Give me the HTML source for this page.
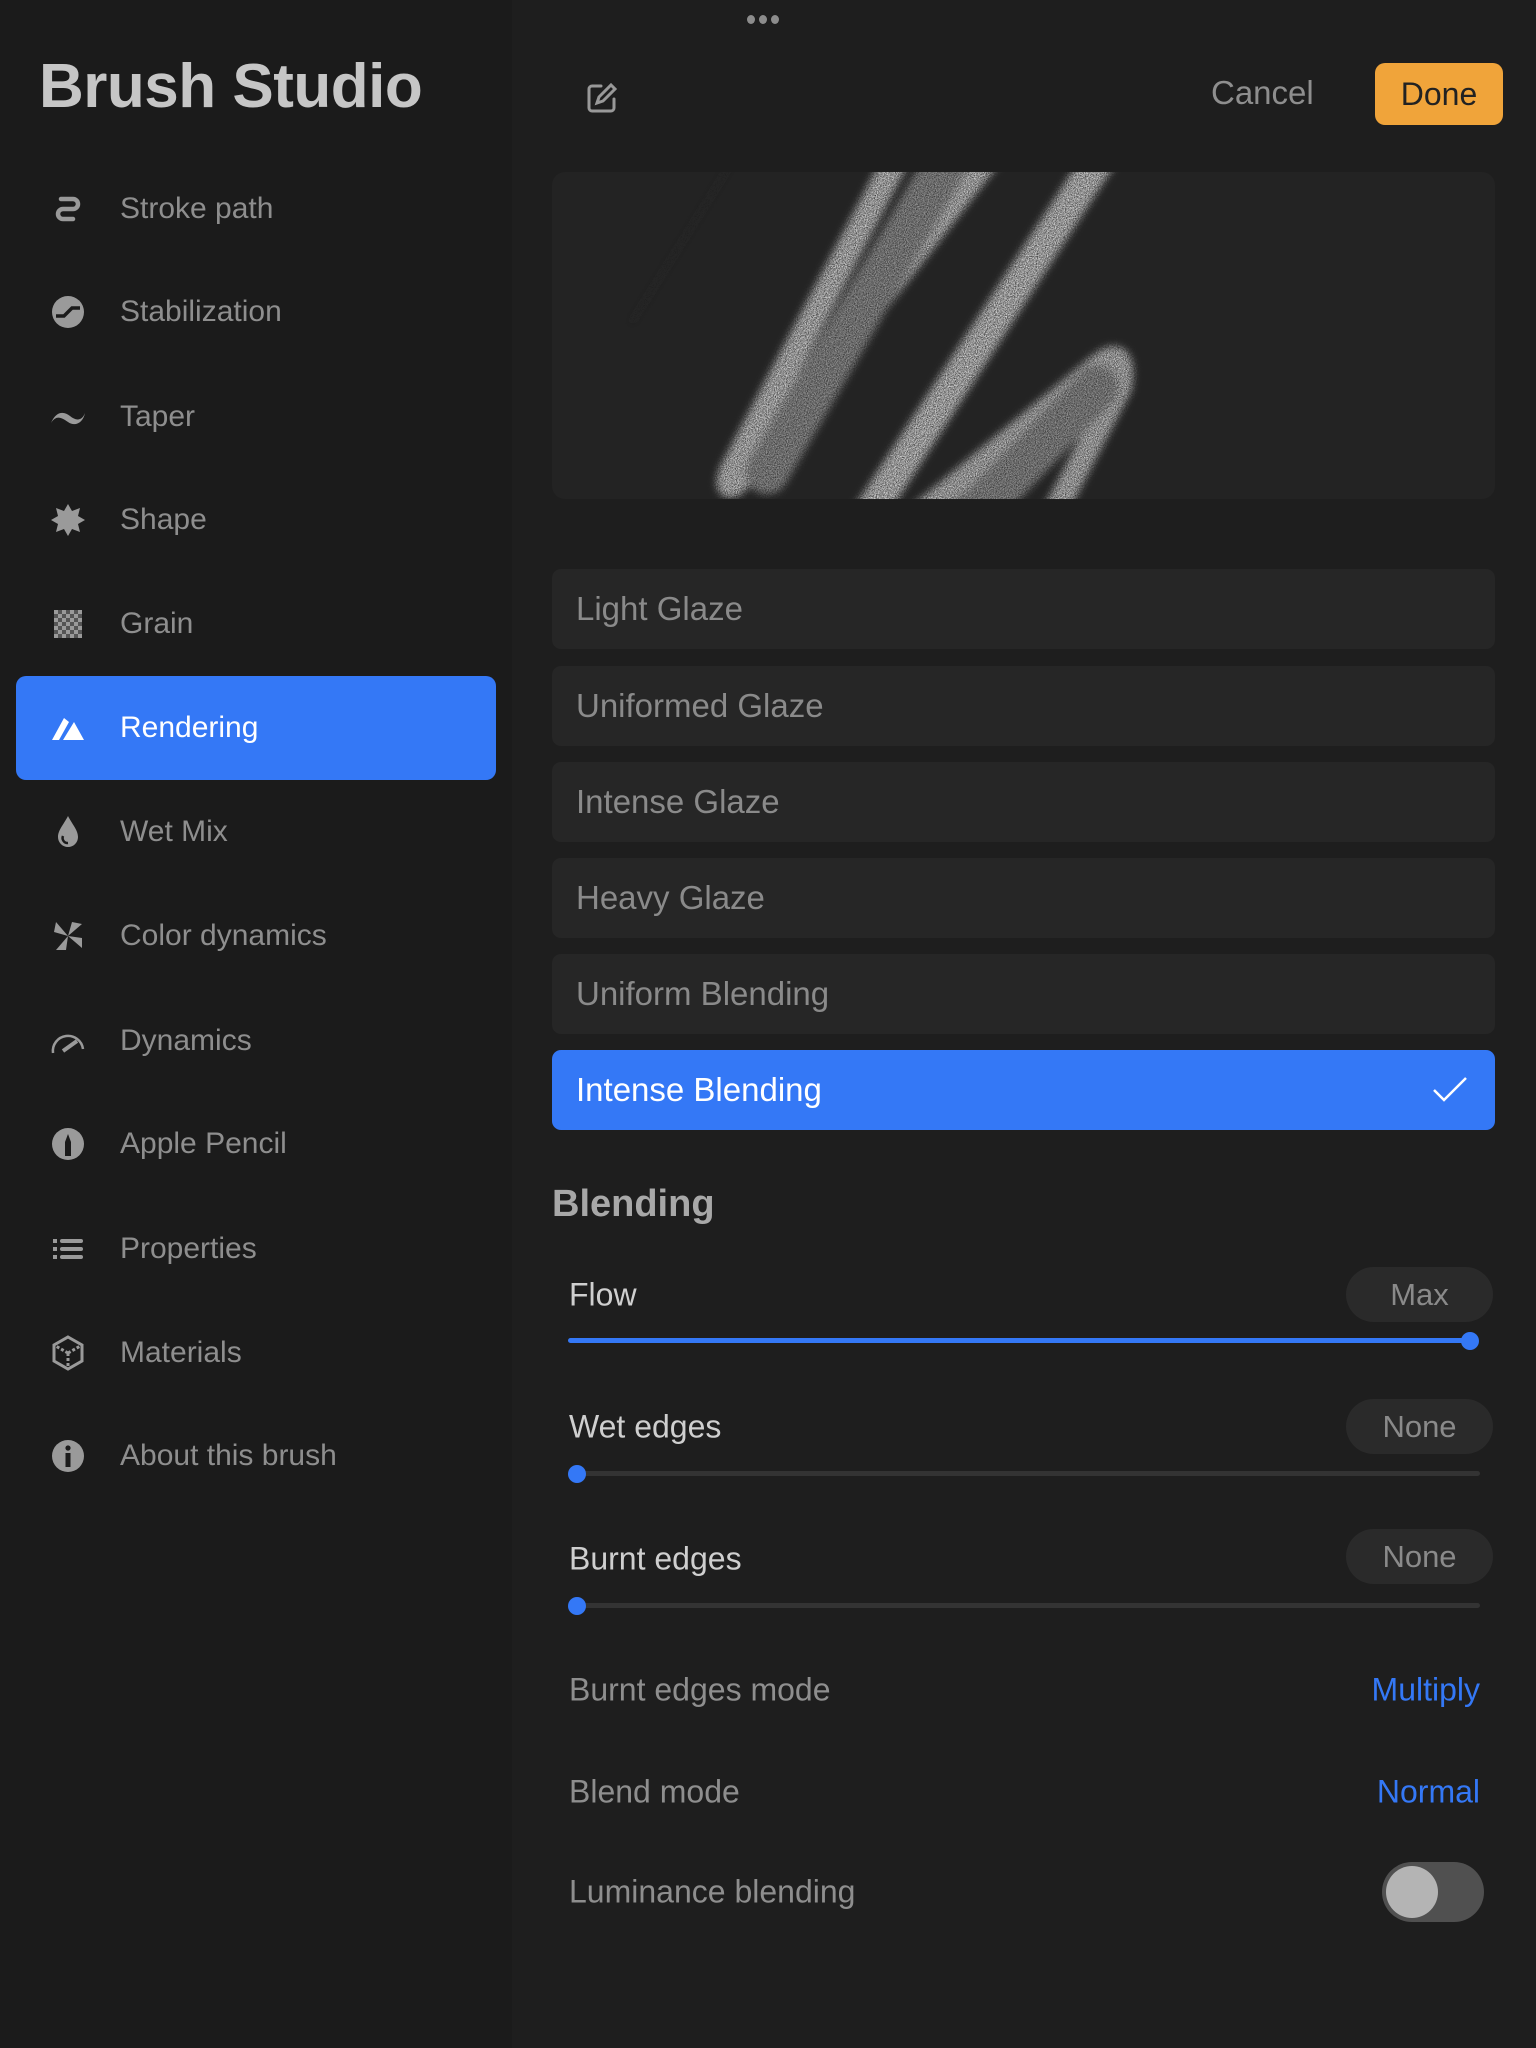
<!DOCTYPE html>
<html><head><meta charset="utf-8"><style>
*{margin:0;padding:0;box-sizing:border-box}
body{width:1536px;height:2048px;background:#1e1e1e;font-family:"Liberation Sans",sans-serif;position:relative;overflow:hidden}
.side{position:absolute;left:0;top:0;width:512px;height:2048px;background:#1b1b1b}
.abs{position:absolute}
.title{left:39px;top:51px;font-size:62px;font-weight:bold;color:#c6c6c6;letter-spacing:-0.5px}
.item{position:absolute;left:16px;width:480px;height:104px;display:flex;align-items:center;color:#8e8e8e;font-size:30px}
.item svg{position:absolute;left:34px;width:36px;height:36px}
.item span{position:absolute;left:104px}
.item.sel{background:#3478f6;border-radius:10px;color:#fff;height:104px}
.row{position:absolute;left:552px;width:943px;height:80px;background:#262626;border-radius:9px;color:#8a8a8a;font-size:33px;display:flex;align-items:center;padding-left:24px}
.row.sel{background:#3478f6;color:#fff}
.lbl{position:absolute;left:569px;font-size:32px;color:#cfcfcf;transform:translateY(-50%)}
.lbl2{position:absolute;left:569px;font-size:32px;color:#8e8e8e;transform:translateY(-50%)}
.pill{position:absolute;left:1346px;width:147px;height:55px;border-radius:28px;background:#2a2a2a;color:#8a8a8a;font-size:31px;display:flex;align-items:center;justify-content:center}
.track{position:absolute;left:568px;width:912px;height:5px;background:#333;border-radius:3px}
.thumb{position:absolute;width:18px;height:18px;border-radius:50%;background:#3478f6}
.blue{position:absolute;right:56px;font-size:32px;color:#3478f6;transform:translateY(-50%)}
</style></head><body>
<div class="side"></div>
<div class="abs" style="left:747px;top:15px;display:flex;gap:4px"><i style="width:8px;height:9px;border-radius:50%;background:#8c8c8c;display:block"></i><i style="width:8px;height:9px;border-radius:50%;background:#8c8c8c;display:block"></i><i style="width:8px;height:9px;border-radius:50%;background:#8c8c8c;display:block"></i></div>
<div class="abs title">Brush Studio</div>

<div class="item" style="top:157px"><svg viewBox="0 0 36 36" fill="none" stroke="#999" stroke-width="4.5" stroke-linecap="round"><path d="M11 8h12a5 5 0 0 1 0 10H13a5 5 0 0 0 0 10h10"/></svg><span>Stroke path</span></div>
<div class="item" style="top:260px"><svg viewBox="0 0 36 36"><circle cx="18" cy="18" r="16" fill="#9a9a9a"/><path d="M6 22h8l8-8h8" stroke="#1b1b1b" stroke-width="3.5" fill="none"/></svg><span>Stabilization</span></div>
<div class="item" style="top:365px"><svg viewBox="0 0 36 36"><path d="M1 24C6 12 14 12 20 17s12 5 15-3c-2 10-10 14-17 9S6 16 1 24z" fill="#9a9a9a"/></svg><span>Taper</span></div>
<div class="item" style="top:468px"><svg viewBox="0 0 36 36"><polygon points="18,2 22,9 30,6 28,14 35,18 28,22 30,30 22,27 18,34 14,27 6,30 8,22 1,18 8,14 6,6 14,9" fill="#9a9a9a"/></svg><span>Shape</span></div>
<div class="item" style="top:572px"><svg viewBox="0 0 36 36"><defs><pattern id="ck" width="8" height="8" patternUnits="userSpaceOnUse"><rect width="4" height="4" fill="#9a9a9a"/><rect x="4" y="4" width="4" height="4" fill="#9a9a9a"/><rect x="4" width="4" height="4" fill="#555"/><rect y="4" width="4" height="4" fill="#555"/></pattern></defs><rect x="4" y="4" width="28" height="28" fill="url(#ck)"/></svg><span>Grain</span></div>
<div class="item sel" style="top:676px"><svg viewBox="0 0 36 36"><path d="M2 30L14 8l5 4L9 30z M13 30l11-18 10 18z" fill="#fff"/></svg><span>Rendering</span></div>
<div class="item" style="top:780px"><svg viewBox="0 0 36 36"><path d="M18 2C14 10 8 16 8 23a10 10 0 0 0 20 0c0-7-6-13-10-21z" fill="#9a9a9a"/><path d="M13 22a5 5 0 0 0 5 7" stroke="#1b1b1b" stroke-width="2.5" fill="none"/></svg><span>Wet Mix</span></div>
<div class="item" style="top:884px"><svg viewBox="0 0 36 36" fill="#9a9a9a"><path d="M18 18L6 4 4 14z M18 18L32 6 22 4z M18 18l14 12 0-10z M18 18L6 32h10z"/></svg><span>Color dynamics</span></div>
<div class="item" style="top:989px"><svg viewBox="0 0 36 36" fill="none" stroke="#9a9a9a" stroke-width="2.5"><path d="M3 30A15 15 0 0 1 33 26"/><path d="M13 28l14-10" stroke-width="4"/></svg><span>Dynamics</span></div>
<div class="item" style="top:1092px"><svg viewBox="0 0 36 36"><circle cx="18" cy="18" r="16" fill="#9a9a9a"/><path d="M15 30V16l3-8 3 8v14z" fill="#1b1b1b"/></svg><span>Apple Pencil</span></div>
<div class="item" style="top:1197px"><svg viewBox="0 0 36 36" fill="#9a9a9a"><rect x="3" y="8" width="4" height="4"/><rect x="3" y="16" width="4" height="4"/><rect x="3" y="24" width="4" height="4"/><rect x="10" y="8" width="23" height="4" rx="2"/><rect x="10" y="16" width="23" height="4" rx="2"/><rect x="10" y="24" width="23" height="4" rx="2"/></svg><span>Properties</span></div>
<div class="item" style="top:1301px"><svg viewBox="0 0 36 36" fill="none" stroke="#9a9a9a" stroke-width="3"><path d="M18 2l14 8v16l-14 8-14-8V10z"/><path d="M18 18l14-8M18 18L4 10M18 18v16" stroke-dasharray="3 2"/></svg><span>Materials</span></div>
<div class="item" style="top:1404px"><svg viewBox="0 0 36 36"><circle cx="18" cy="18" r="16" fill="#9a9a9a"/><circle cx="18" cy="10" r="2.6" fill="#1b1b1b"/><rect x="15.5" y="15" width="5" height="14" fill="#1b1b1b"/></svg><span>About this brush</span></div>

<svg class="abs" style="left:584px;top:80px" width="36" height="36" viewBox="0 0 36 36" fill="none" stroke="#999" stroke-width="3" stroke-linecap="round"><path d="M17 6H8a3 3 0 0 0-3 3v19a3 3 0 0 0 3 3h19a3 3 0 0 0 3-3v-9"/><path d="M13 23l2-6L27 5l4 4-12 12z"/></svg>
<div class="abs" style="left:1211px;top:74px;font-size:33px;color:#8e8e8e">Cancel</div>
<div class="abs" style="left:1375px;top:63px;width:128px;height:62px;background:#f0a43a;border-radius:10px;color:#222;font-size:32px;display:flex;align-items:center;justify-content:center">Done</div>

<svg class="abs" style="left:552px;top:172px" width="943" height="327" viewBox="0 0 943 327">
<defs><clipPath id="cp"><rect width="943" height="327" rx="13"/></clipPath>
<filter id="nz" x="-20%" y="-20%" width="140%" height="140%"><feGaussianBlur stdDeviation="4" result="b"/><feTurbulence type="fractalNoise" baseFrequency="0.9" numOctaves="2" result="n"/><feColorMatrix in="n" type="matrix" values="0 0 0 0 1 0 0 0 0 1 0 0 0 0 1 0 0 0 1.6 -0.2" result="m"/><feComposite in="b" in2="m" operator="in"/></filter></defs>
<rect width="943" height="327" rx="13" fill="#232323"/>
<g clip-path="url(#cp)" fill="none" stroke-linecap="round" filter="url(#nz)">
<path d="M180 -10L80 150" stroke="#2c2c2c" stroke-width="2"/>
<path d="M348 -20L180 300Q170 330 200 290L440 -20" stroke="#d8d8d8" stroke-width="26"/>
<path d="M395 -10L215 300" stroke="#9a9a9a" stroke-width="44"/>
<path d="M552 -20L315 345" stroke="#dcdcdc" stroke-width="32"/>
<path d="M365 345L545 195Q575 170 568 215L500 345" stroke="#d0d0d0" stroke-width="24"/>
<path d="M420 345L545 215" stroke="#999" stroke-width="44"/>
</g></svg>

<div class="row" style="top:569px">Light Glaze</div>
<div class="row" style="top:666px">Uniformed Glaze</div>
<div class="row" style="top:762px">Intense Glaze</div>
<div class="row" style="top:858px">Heavy Glaze</div>
<div class="row" style="top:954px">Uniform Blending</div>
<div class="row sel" style="top:1050px">Intense Blending<svg class="abs" style="left:880px;top:26px" width="36" height="28" viewBox="0 0 36 28" fill="none" stroke="#fff" stroke-width="2.5"><path d="M2 14l10 10L34 2"/></svg></div>

<div class="abs" style="left:552px;top:1183px;font-size:38px;font-weight:bold;color:#a8a8a8">Blending</div>

<div class="lbl" style="top:1295px">Flow</div>
<div class="pill" style="top:1267px">Max</div>
<div class="track" style="top:1338px;background:#3478f6;width:902px"></div>
<div class="thumb" style="left:1461px;top:1332px"></div>

<div class="lbl" style="top:1427px">Wet edges</div>
<div class="pill" style="top:1399px">None</div>
<div class="track" style="top:1471px"></div>
<div class="thumb" style="left:568px;top:1465px"></div>

<div class="lbl" style="top:1559px">Burnt edges</div>
<div class="pill" style="top:1529px">None</div>
<div class="track" style="top:1603px"></div>
<div class="thumb" style="left:568px;top:1597px"></div>

<div class="lbl2" style="top:1690px">Burnt edges mode</div>
<div class="blue" style="top:1690px">Multiply</div>
<div class="lbl2" style="top:1792px">Blend mode</div>
<div class="blue" style="top:1792px">Normal</div>
<div class="lbl2" style="top:1892px">Luminance blending</div>
<div class="abs" style="left:1382px;top:1862px;width:102px;height:60px;border-radius:30px;background:#505050"><div style="position:absolute;left:4px;top:4px;width:52px;height:52px;border-radius:50%;background:#b4b4b4"></div></div>
</body></html>
